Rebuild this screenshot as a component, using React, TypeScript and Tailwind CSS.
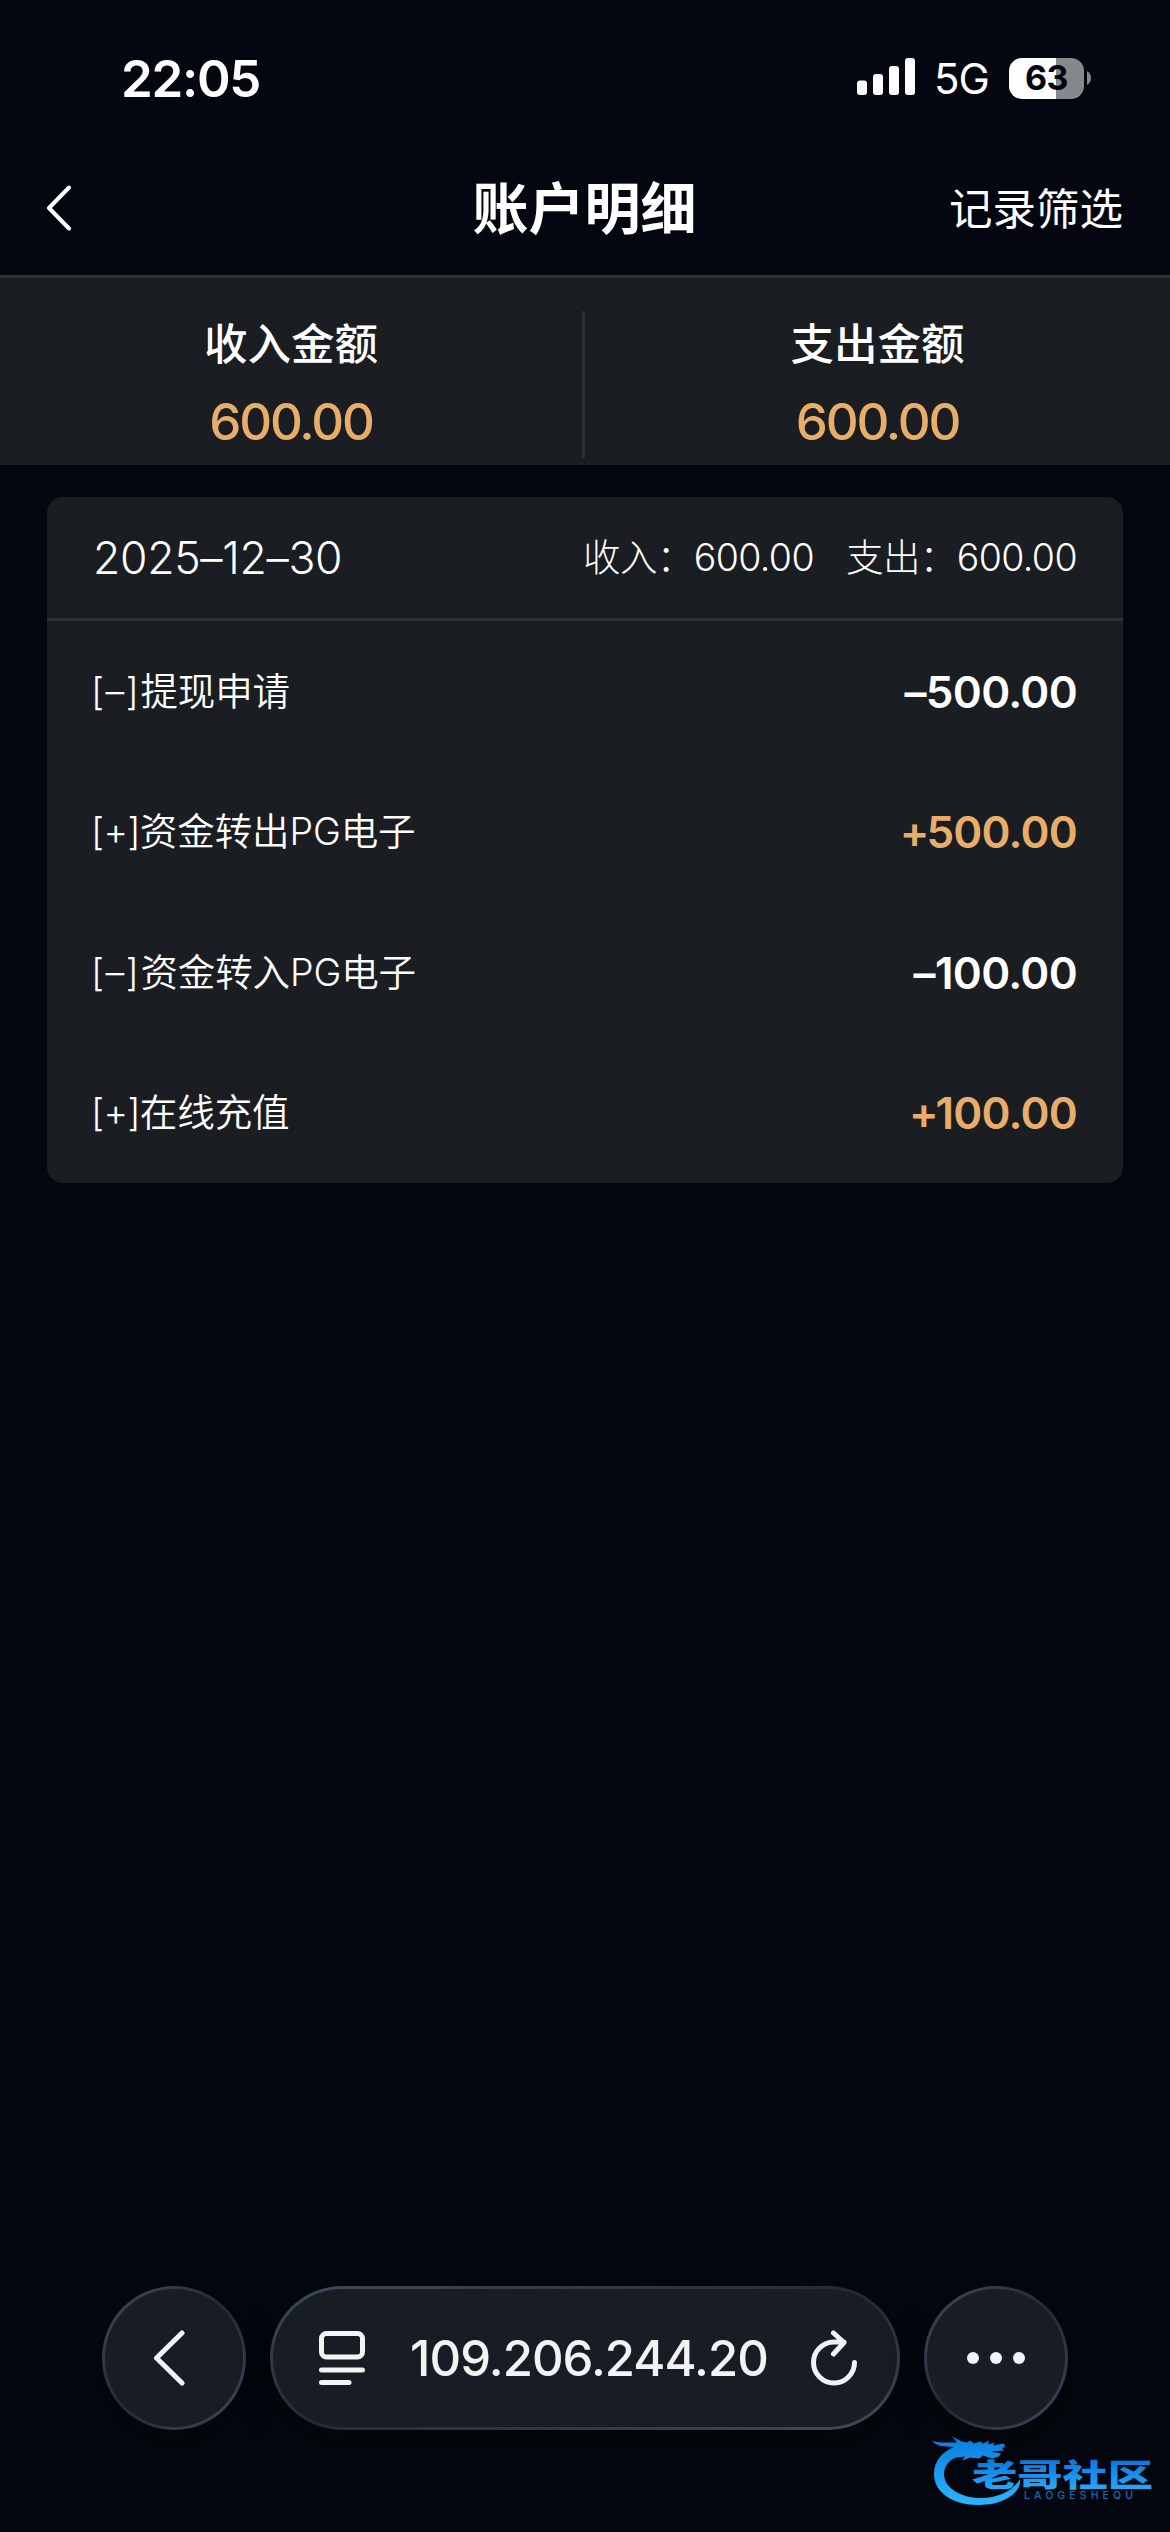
import React from "react";

const rows = [
  { sign: "–", label: "提现申请", value: "500.00", gain: false },
  { sign: "+", label: "资金转出PG电子", value: "500.00", gain: true },
  { sign: "–", label: "资金转入PG电子", value: "100.00", gain: false },
  { sign: "+", label: "在线充值", value: "100.00", gain: true },
];

function StatusBar() {
  return (
    <div className="flex h-[156px] items-center justify-between pl-[121px] pr-[79px]">
      <div className="text-[51px] font-semibold leading-none tracking-[-1.3px]">22:05</div>
      <div className="flex items-center">
        <svg width="59" height="42" viewBox="0 0 59 42" fill="#fff">
          <rect x="0" y="23.5" width="10" height="14.5" rx="3" />
          <rect x="16" y="17" width="10" height="21" rx="3" />
          <rect x="32" y="9" width="10" height="29" rx="3" />
          <rect x="48" y="1" width="10" height="37" rx="3" />
        </svg>
        <div className="ml-[18px] mt-[2px] w-[57px] whitespace-nowrap text-[42px] font-normal leading-none tracking-[-1px]">5G</div>
        <div className="ml-[18px] flex h-[41px] w-[75px] items-center justify-center rounded-[13px] bg-linear-to-r from-white from-63% to-[#87888c] to-63% text-[34px] font-bold leading-none tracking-[-0.5px] text-[#04070f]">
          63
        </div>
        <svg className="ml-[3px]" width="4" height="14" viewBox="0 0 4 14" fill="#87888c">
          <path d="M0 0C2.500 1.500 4 4 4 7s-1.500 5.500-4 7z" />
        </svg>
      </div>
    </div>
  );
}

function Summary({ label }: { label: string }) {
  return (
    <div className="flex flex-col items-center">
      <div className="mt-[34px] text-[43.500px] font-medium leading-[64px]">{label}</div>
      <div className="mt-[15px] text-[51px] font-medium leading-[62px] tracking-[-2.2px] text-[#e8ad68]">600.00</div>
    </div>
  );
}

const glassRing =
  "rounded-full bg-linear-to-br from-[#3d4c60] via-[#222935] to-[#3d4c60] p-[3px] shadow-[0_12px_30px_rgba(3,7,8,0.8)]";

function Watermark() {
  return (
    <svg className="absolute left-[925px] top-[2430px]" width="235" height="82" viewBox="0 0 235 82">
      <defs>
        <linearGradient id="ring" x1="0" y1="8" x2="0" y2="76" gradientUnits="userSpaceOnUse">
          <stop offset="0" stopColor="#0a7de0" />
          <stop offset="1" stopColor="#2cb5ff" />
        </linearGradient>
        <linearGradient id="word" x1="0" y1="30" x2="0" y2="60" gradientUnits="userSpaceOnUse">
          <stop offset="0" stopColor="#0a78dc" />
          <stop offset="1" stopColor="#27aaf8" />
        </linearGradient>
      </defs>
      <path
        fill="url(#ring)"
        d="M7 11l8 1.500h17l-5-6 10 5 5 1 3-2 4 3 6-2 3 2 6-3-1 4 7-2-2 3 11-2 1 3-3 2 2 2-13 1 10 2-2 3-7 2-9-3-4 3-9-1-8 3 3-4-9 1C27 29 19 34 19 44c0 14 17 24 37 24 17 0 32-7 39-19 2 12-14 26-41 26C27 75 9 62 9 44c0-13 8-22 20-27l-13-1c-4-1-7-3-9-5z"
      />
      <text x="47" y="55.5" textLength="181" lengthAdjust="spacingAndGlyphs" fontFamily="'Noto Sans CJK SC', sans-serif" fontWeight="900" fontSize="31" fill="url(#word)">
        老哥社区
      </text>
      <text x="99" y="69" textLength="109" fontFamily="Inter, sans-serif" fontWeight="500" fontSize="10.500" fill="#1b6cab">
        LAOGESHEQU
      </text>
    </svg>
  );
}

export default function App() {
  return (
    <div className="relative flex h-[2532px] w-[1170px] flex-col overflow-hidden bg-[#04070f] font-['Inter','Noto_Sans_CJK_SC',sans-serif] text-white">
      <StatusBar />
      <header className="grid h-[119px] grid-cols-3 items-center pl-[46px] pr-[47px] pb-[16px]">
        <svg width="26" height="46" viewBox="0 0 26 46" fill="none" stroke="#fff" strokeWidth="4" strokeLinecap="round" strokeLinejoin="round">
          <path d="M23 2.500 3 23l20 20.500" />
        </svg>
        <h1 className="pt-[3px] text-center text-[56px] font-bold leading-none">账户明细</h1>
        <div className="pt-[5px] text-right text-[43.500px] leading-none">记录筛选</div>
      </header>

      <section className="grid h-[190px] grid-cols-[582px_3px_585px] border-t-[3px] border-[#2d3036] bg-[#1a1d21]">
        <Summary label="收入金额" />
        <div className="mt-[33px] h-[147px] bg-[#2d3036]" />
        <Summary label="支出金额" />
      </section>

      <section className="mx-[47px] mt-[32px] rounded-[16px] bg-[#1a1d21]">
        <div className="flex h-[124px] items-center justify-between border-b-[3px] border-[#2d3036] px-[46px]">
          <div className="pt-[2px] text-[44.500px] font-[350] tracking-[-0.3px]">2025–12–30</div>
          <div className="flex gap-[32px] pt-[1px] text-[37.500px] font-light tracking-[-0.6px]">
            <span>收入：600.00</span>
            <span>支出：600.00</span>
          </div>
        </div>
        {rows.map((r) => (
          <div key={r.label} className="flex h-[140.500px] items-center justify-between pl-[44px] pr-[46px] pt-[1px]">
            <div className="text-[37.500px] font-[350]">
              <span className={r.gain ? "tracking-[-0.6px]" : "tracking-[1.5px]"}>[{r.sign}]</span>
              <span className="tracking-[-0.1px]">{r.label}</span>
            </div>
            <div className={r.gain ? "text-[44px] font-semibold tracking-[-0.8px] text-[#e8ad68]" : "text-[44px] font-semibold tracking-[-0.7px]"}>
              <span className={r.gain ? "tracking-[-3px]" : ""}>{r.sign}</span>
              {r.value}
            </div>
          </div>
        ))}
      </section>

      <nav className="mb-[102px] mt-auto flex h-[144px] justify-between px-[102px]">
        <div className={glassRing + " w-[144px]"}>
          <div className="flex h-full items-center justify-center rounded-full bg-[#181c25]">
            <svg className="mr-[10px]" width="32" height="56" viewBox="0 0 32 56" fill="none" stroke="#eef2fc" strokeWidth="5" strokeLinecap="round" strokeLinejoin="round">
              <path d="M29 3 3.500 28 29 53" />
            </svg>
          </div>
        </div>
        <div className={glassRing + " w-[630px]"}>
          <div className="flex h-full items-center rounded-full bg-[#181c25] pl-[46px] pr-[40px]">
            <svg width="46" height="54" viewBox="0 0 46 54" fill="none" stroke="#f3f3f3" strokeWidth="5" strokeLinecap="round">
              <rect x="2.500" y="2.500" width="41" height="23.500" rx="5" />
              <path d="M2.500 39H43.500M2.500 51.500H30" />
            </svg>
            <div className="flex-1 pl-[2px] text-center text-[49px] font-medium leading-none tracking-[-0.95px] text-[#f3f3f3]">109.206.244.20</div>
            <svg width="46" height="56" viewBox="0 0 46 56" fill="none" stroke="#eef2fc" strokeWidth="5" strokeLinecap="round" strokeLinejoin="round">
              <path d="M43.500 32.500A20.500 20.500 0 1 1 23 12h10M22.500 3l10.500 9.500L22.500 24" />
            </svg>
          </div>
        </div>
        <div className={glassRing + " w-[144px]"}>
          <div className="flex h-full items-center justify-center gap-[11px] rounded-full bg-[#181c25]">
            <span className="size-[12px] rounded-full bg-[#eef2fc]" />
            <span className="size-[12px] rounded-full bg-[#eef2fc]" />
            <span className="size-[12px] rounded-full bg-[#eef2fc]" />
          </div>
        </div>
      </nav>
      <Watermark />
    </div>
  );
}
